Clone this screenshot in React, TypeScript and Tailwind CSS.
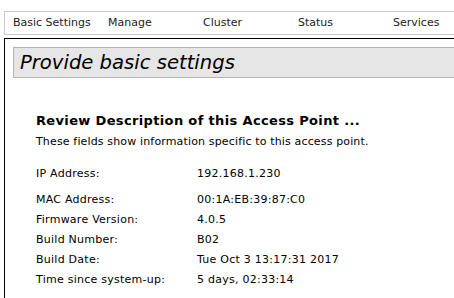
const tabs = ['Basic Settings', 'Manage', 'Cluster', 'Status', 'Services'];

const rows: [string, string][] = [
  ['MAC Address:', '00:1A:EB:39:87:C0'],
  ['Firmware Version:', '4.0.5'],
  ['Build Number:', 'B02'],
  ['Build Date:', 'Tue Oct 3 13:17:31 2017'],
  ['Time since system-up:', '5 days, 02:33:14'],
];

const Row = ({ label, value }: { label: string; value: string }) => (
  <div className="flex h-5 items-center">
    <div className="w-[161px] shrink-0">{label}</div>
    <div>{value}</div>
  </div>
);

export default function App() {
  return (
    <div className="w-[454px] h-[298px] overflow-hidden bg-white text-black text-[11px]" style={{ fontFamily: '"DejaVu Sans", Verdana, sans-serif' }}>
      {/* tabs */}
      <div className="mt-[11px] ml-[4px] w-[460px] h-[24px] flex items-center border-y border-l border-[#c8c8c8] text-[#222]">
        {tabs.map(t => (
          <div key={t} className="w-[95px] shrink-0 pl-[8px] whitespace-nowrap">{t}</div>
        ))}
      </div>

      {/* main panel */}
      <div className="mt-[3px] ml-[4px] w-[460px] h-[300px] border-t border-l border-black pl-[8px] pt-[8px]">
        <div className="h-[31px] flex items-center border border-[#b4b4b4] bg-[#e6e6e6] pl-[6px]">
          <span className="text-[19.6px] italic leading-none">Provide basic settings</span>
        </div>

        <div className="pl-[23px] tracking-[0.25px]">
          <h2 className="mt-[35px] text-[13px] leading-[16px] font-bold tracking-[0.35px]">Review Description of this Access Point ...</h2>
          <p className="mt-[6px] leading-[14px] tracking-[0.15px]">These fields show information specific to this access point.</p>
          <div className="mt-[15px]">
            <Row label="IP Address:" value="192.168.1.230" />
          </div>
          <div className="mt-[6px]">
            {rows.map(([l, v]) => <Row key={l} label={l} value={v} />)}
          </div>
        </div>
      </div>
    </div>
  );
}
